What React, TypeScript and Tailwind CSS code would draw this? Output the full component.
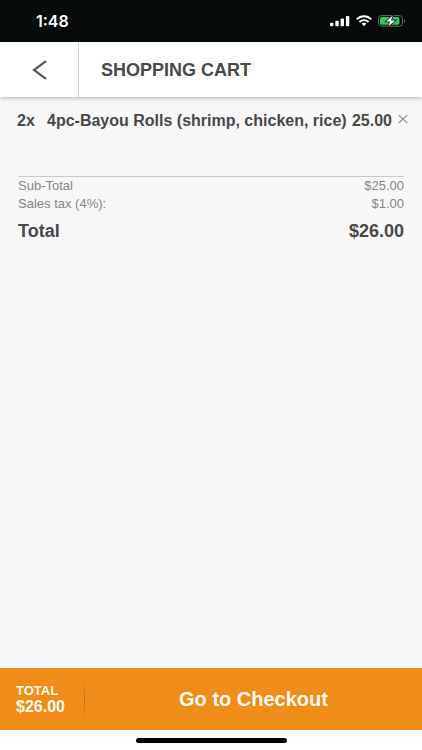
function StatusIcons() {
  return (
    <div className="flex items-center gap-1.5">
      <svg width="20" height="12" viewBox="0 0 20 12" fill="#fff" aria-hidden="true">
        <rect x="0" y="7.8" width="3.4" height="3.4" rx="1" />
        <rect x="5.3" y="5.8" width="3.4" height="5.4" rx="1" />
        <rect x="10.6" y="3.4" width="3.4" height="7.8" rx="1" />
        <rect x="15.9" y="1" width="3.4" height="10.2" rx="1" />
      </svg>
      <svg width="16" height="12" viewBox="0 0 16 12" fill="none" stroke="#fff" strokeWidth="1.9" aria-hidden="true">
        <path d="M.7 4.3C4.8.2 11.2.2 15.3 4.3" />
        <path d="M3.4 7C6 4.5 10 4.5 12.6 7" />
        <path d="M5.6 8.5Q8 6.9 10.4 8.5L8 11.2Z" fill="#fff" stroke="none" />
      </svg>
      <svg width="28" height="12" viewBox="0 0 28 12" aria-hidden="true">
        <rect x=".5" y=".6" width="24" height="10.6" rx="3" fill="none" stroke="#667069" />
        <rect x="2" y="2.1" width="19.5" height="7.6" rx="1.6" fill="#36c65b" />
        <path d="M26 4.2c1.5.5 1.5 3 0 3.5z" fill="#667069" />
        <path d="M14.8.6 8 6.6h4L10.2 11.4l7-6h-4.1z" fill="#fff" stroke="#070b0c" strokeWidth="1.4" paintOrder="stroke" />
      </svg>
    </div>
  );
}

const charges = [
  { label: "Sub-Total", amount: "$25.00" },
  { label: "Sales tax (4%):", amount: "$1.00" },
];

export default function App() {
  return (
    <div className="flex min-h-screen flex-col bg-[#f7f7f7] font-['Liberation_Sans',Arial,sans-serif] text-[#484848]">
      <div className="flex h-[42px] items-center justify-between bg-[#070b0c] pr-4 pl-9 text-white">
        <span className="font-[Inter,sans-serif] text-base font-semibold">1:48</span>
        <StatusIcons />
      </div>

      <header className="flex h-[55px] items-stretch bg-white shadow-[0_1px_4px_rgba(0,0,0,0.28)]">
        <button type="button" aria-label="Back" className="flex w-[79px] items-center justify-center border-r border-[#cfcfcf]">
          <svg width="16" height="20" viewBox="0 0 16 20" fill="none" stroke="#5a5a5a" strokeWidth="2.2" aria-hidden="true">
            <path d="M15 1.2 3 10l12 8.8" />
          </svg>
        </button>
        <h1 className="flex items-center pl-[22px] text-lg font-bold">SHOPPING CART</h1>
      </header>

      <main className="flex-1 pt-3">
        <div className="flex h-[67px] items-start pr-3.5 pl-[17px] text-base font-bold whitespace-nowrap">
          <span className="w-[30px] shrink-0">2x</span>
          <span className="flex-1">4pc-Bayou Rolls (shrimp, chicken, rice)</span>
          <span>25.00</span>
          <button type="button" aria-label="Remove item" className="ml-1.5 flex h-5 w-2.5 shrink-0 items-center justify-center">
            <svg width="10" height="10" viewBox="0 0 10 10" stroke="#858585" strokeWidth="1.1" aria-hidden="true">
              <path d="M.7 1.2l8.6 7.6M9.3 1.2.7 8.8" />
            </svg>
          </button>
        </div>
        <dl className="mx-[18px] border-t border-[#c9c9c9]">
          {charges.map((c) => (
            <div key={c.label} className="flex h-[18px] items-center justify-between text-[13px] text-[#858585]">
              <dt>{c.label}</dt>
              <dd>{c.amount}</dd>
            </div>
          ))}
          <div className="flex h-9 items-center justify-between text-lg font-bold">
            <dt>Total</dt>
            <dd>$26.00</dd>
          </div>
        </dl>
      </main>

      <footer className="bg-white">
        <div className="flex h-[62px] items-center bg-[#f08c1a] font-bold text-[#fffaf0]">
          <div className="w-[84px] pl-4">
            <div className="text-[13px] leading-[15px]">TOTAL</div>
            <div className="text-base leading-[18px]">$26.00</div>
          </div>
          <div className="h-11 w-px bg-linear-to-b from-transparent via-[#c9700c] to-transparent" />
          <button type="button" className="h-full flex-1 text-xl font-bold">Go to Checkout</button>
        </div>
        <div className="flex h-5 items-center justify-center">
          <div className="h-[5px] w-[151px] rounded-full bg-black" />
        </div>
      </footer>
    </div>
  );
}
